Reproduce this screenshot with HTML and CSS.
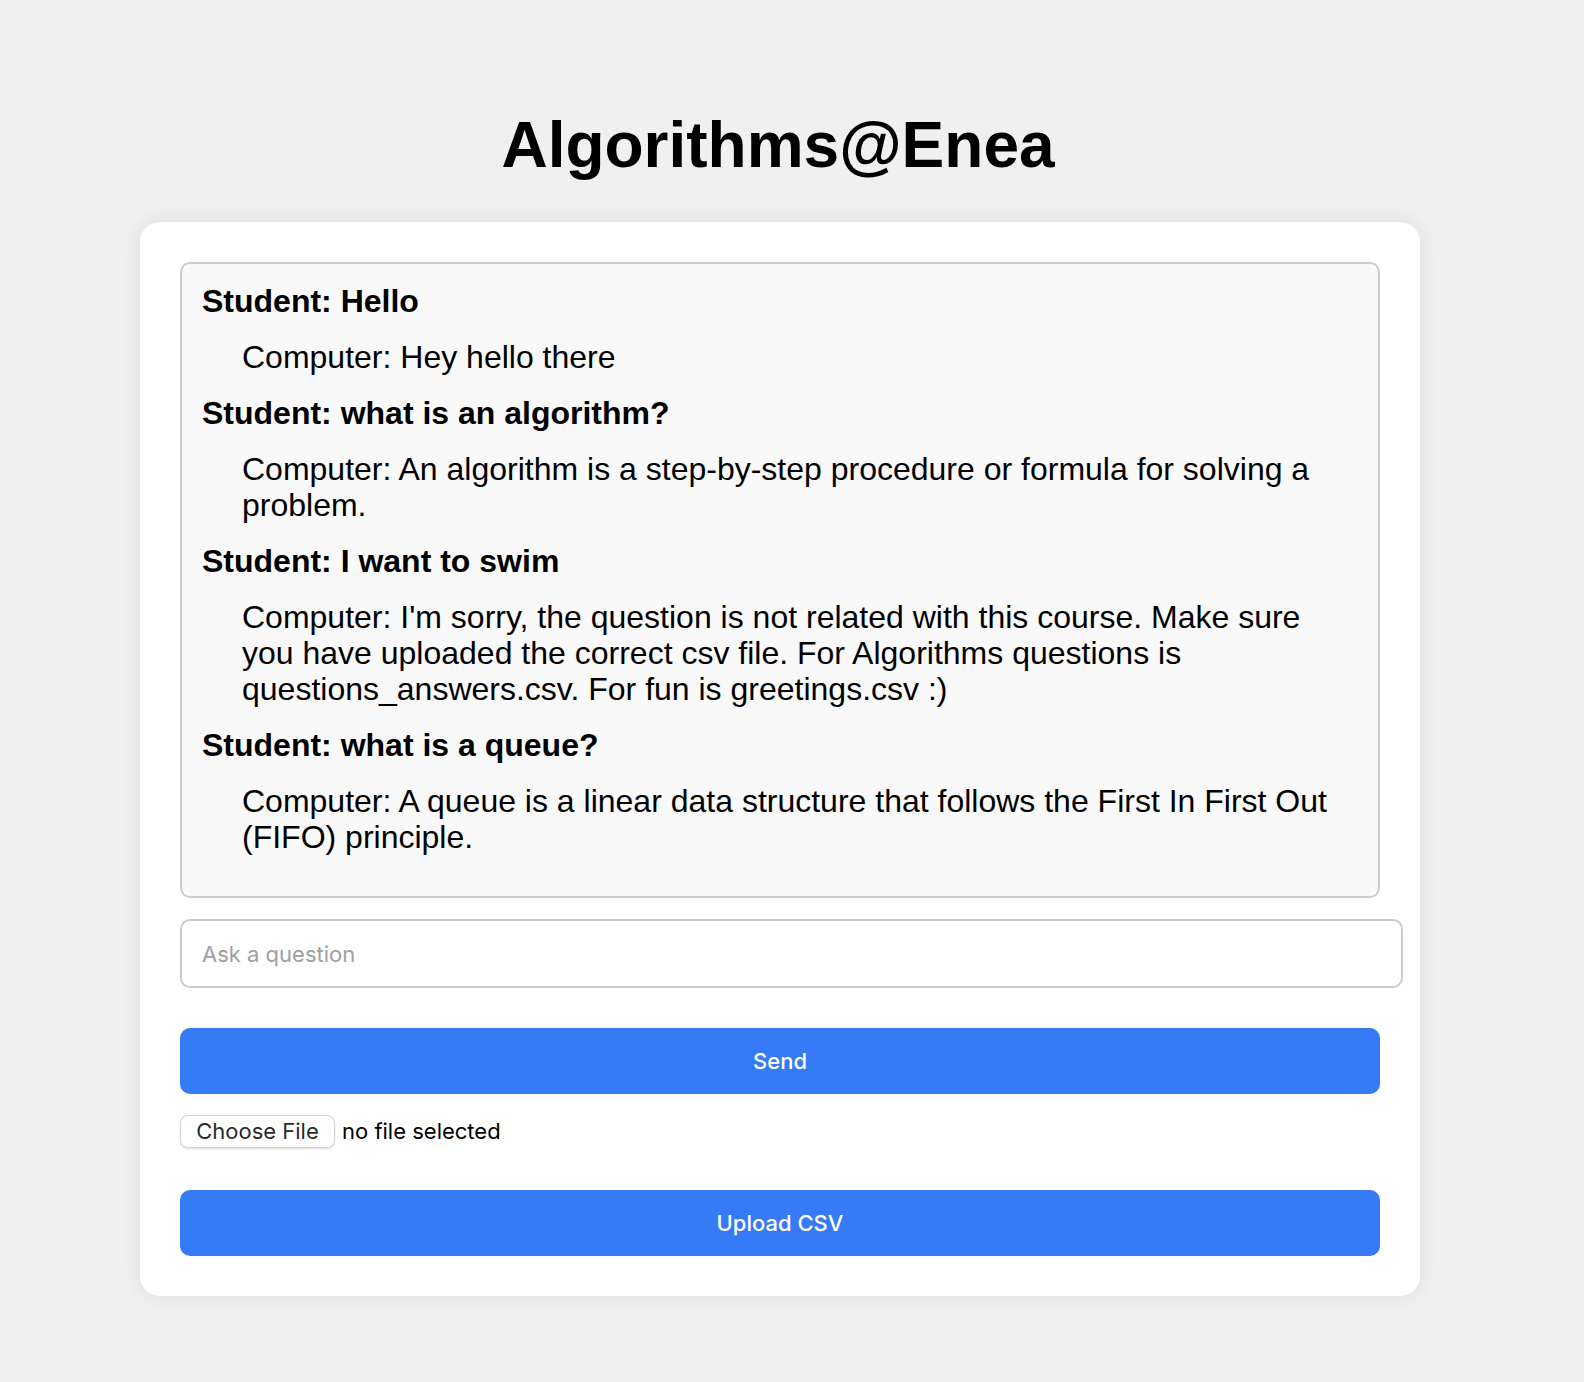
FILE: index.html
```html
<!DOCTYPE html>
<html lang="en">
<head>
<meta charset="utf-8">
<title>Algorithms@Enea</title>
<link rel="stylesheet" href="styles.css">
</head>
<body>
<main class="page">
  <h1 class="title">Algorithms@Enea</h1>
  <section class="card">
    <div class="chat">
      <p class="msg student">Student: Hello</p>
      <p class="msg computer">Computer: Hey hello there</p>
      <p class="msg student">Student: what is an algorithm?</p>
      <p class="msg computer">Computer: An algorithm is a step-by-step procedure or formula for solving a problem.</p>
      <p class="msg student">Student: I want to swim</p>
      <p class="msg computer">Computer: I'm sorry, the question is not related with this course. Make sure you have uploaded the correct csv file. For Algorithms questions is questions_answers.csv. For fun is greetings.csv :)</p>
      <p class="msg student">Student: what is a queue?</p>
      <p class="msg computer">Computer: A queue is a linear data structure that follows the First In First Out (FIFO) principle.</p>
    </div>
    <input class="ask" type="text" placeholder="Ask a question">
    <button class="btn send" type="button">Send</button>
    <div class="file-row">
      <span class="file-btn">Choose File</span>
      <span class="file-name">no file selected</span>
    </div>
    <button class="btn upload" type="button">Upload CSV</button>
  </section>
</main>
</body>
</html>
```

FILE: styles.css
```css
html, body {
  margin: 0;
  padding: 0;
  background: #f0f0f0;
}

body {
  font-family: "Liberation Sans", Arial, Helvetica, sans-serif;
  color: #000;
  padding-right: 24px;
}

.page {
  padding-top: 108px;
  padding-bottom: 60px;
  display: flex;
  flex-direction: column;
  align-items: center;
}

.title {
  margin: 0 0 40px;
  padding-right: 4px;
  font-size: 64px;
  line-height: 74px;
  font-weight: bold;
  text-align: center;
}

.card {
  box-sizing: border-box;
  width: 1280px;
  background: #fff;
  border-radius: 20px;
  padding: 40px;
  box-shadow: 0 0 20px rgba(0, 0, 0, 0.08);
}

.chat {
  box-sizing: border-box;
  width: 1200px;
  background: #f9f9f9;
  border: 2px solid #cccccc;
  border-radius: 10px;
  padding: 19px 30px 21px 20px;
}

.msg {
  margin: 0 0 20px;
  font-size: 32px;
  line-height: 36px;
}

.student {
  font-weight: bold;
}

.computer {
  padding-left: 40px;
}

.ask {
  display: block;
  box-sizing: border-box;
  width: 1223px;
  height: 69px;
  margin: 21px 0 0;
  padding: 0 20px;
  border: 2px solid #cccccc;
  border-radius: 10px;
  background: #fff;
  font-family: Inter, "Noto Sans", sans-serif;
  font-size: 22px;
  color: #000;
  outline: none;
}

.ask::placeholder {
  color: #9f9f9f;
}

.btn {
  display: block;
  width: 1200px;
  height: 66px;
  border: none;
  border-radius: 10px;
  background: #377af5;
  color: #fff;
  font-family: Inter, "Noto Sans", sans-serif;
  font-size: 22px;
  font-weight: 500;
  cursor: pointer;
}

.send {
  margin-top: 40px;
}

.file-row {
  display: flex;
  align-items: center;
  gap: 7px;
  margin-top: 21px;
  height: 32px;
  font-family: Inter, "Noto Sans", sans-serif;
  font-size: 22px;
}

.file-btn {
  box-sizing: border-box;
  display: flex;
  align-items: center;
  justify-content: center;
  width: 155px;
  height: 33px;
  border: 1px solid #d4d4d4;
  border-radius: 8px;
  background: #fff;
  color: #2a2a2a;
  box-shadow: 0 1px 2px rgba(0, 0, 0, 0.15);
}

.file-name {
  color: #000;
}

.upload {
  margin-top: 43px;
}
```
